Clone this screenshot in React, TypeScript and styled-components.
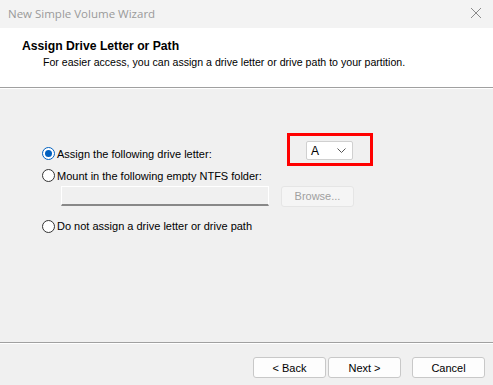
import React from "react";
import styled, { createGlobalStyle } from "styled-components";

const Global = createGlobalStyle`
  html, body { margin: 0; padding: 0; background: #f0f0f0; }
  *, *::before, *::after { box-sizing: border-box; }
`;

const Window = styled.div`
  width: 493px;
  height: 385px;
  display: flex;
  flex-direction: column;
  background: #f0f0f0;
  font-family: "Liberation Sans", Arial, sans-serif;
  font-size: 11px;
  color: #000;
  overflow: hidden;
`;

const TitleBar = styled.div`
  height: 28px;
  flex: none;
  display: flex;
  align-items: center;
  justify-content: space-between;
  padding: 0 8px 2px 8px;
  background: #f3f3f3;
  color: #9a9a9a;
  font-family: "Open Sans", "Noto Sans", sans-serif;
  font-size: 11.5px;
`;

const CloseBtn = styled.div`
  width: 12px;
  height: 12px;
  display: flex;
  margin-right: 3px;
`;

const Header = styled.div`
  height: 59px;
  flex: none;
  background: #ffffff;
  padding: 11px 0 0 22px;
  display: flex;
  flex-direction: column;
  gap: 2px;
`;

const HeaderTitle = styled.div`
  font-weight: bold;
  font-size: 12.2px;
  line-height: 15px;
`;

const HeaderSub = styled.div`
  padding-left: 21px;
  font-size: 10.6px;
`;

const Separator = styled.div`
  flex: none;
  height: 2px;
  border-top: 1px solid #a0a0a0;
  border-bottom: 1px solid #ffffff;
`;

const Body = styled.div`
  flex: 1;
  padding: 53px 0 0 42px;
  display: flex;
  flex-direction: column;
`;

const OptionRow = styled.div<{ $h: number }>`
  height: ${(p) => p.$h}px;
  display: grid;
  grid-template-columns: 264px auto;
  align-items: center;
`;

const RadioLabel = styled.label`
  display: flex;
  align-items: center;
  gap: 2px;
  white-space: nowrap;
`;

const RadioCircle = styled.span<{ $checked?: boolean }>`
  width: 13px;
  height: 13px;
  border-radius: 50%;
  border: 1px solid ${(p) => (p.$checked ? "#0060c0" : "#333")};
  background: #fff;
  display: flex;
  align-items: center;
  justify-content: center;
  &::after {
    content: "";
    display: ${(p) => (p.$checked ? "block" : "none")};
    width: 7px;
    height: 7px;
    border-radius: 50%;
    background: #0060c0;
  }
`;

const Highlight = styled.div`
  position: relative;
  align-self: start;
  margin-top: -1px;
  width: 47px;
  height: 19px;
  &::before {
    content: "";
    position: absolute;
    left: -19px;
    top: -8px;
    width: 86px;
    height: 33px;
    border: 3px solid #ff0000;
  }
`;

const Select = styled.div`
  width: 47px;
  height: 19px;
  background: #fff;
  border: 1px solid #d0d0d0;
  border-radius: 2px;
  display: flex;
  align-items: center;
  justify-content: space-between;
  padding: 0 6px 0 4px;
  font-size: 12px;
`;

const FolderRow = styled.div`
  display: flex;
  align-items: center;
  gap: 12px;
  padding-left: 19px;
  height: 20px;
  margin-bottom: 9px;
`;

const TextBox = styled.div`
  width: 208px;
  height: 20px;
  background: #f0f0f0;
  border-top: 1px solid #ffffff;
  border-left: 1px solid #ffffff;
  border-right: 1px solid #ffffff;
  border-bottom: 2px solid #888888;
`;

const Button = styled.button<{ $disabled?: boolean; $sep?: boolean }>`
  height: 21px;
  width: 73px;
  font-family: inherit;
  font-size: 11px;
  background: ${(p) => (p.$disabled ? "#f5f5f5" : "#fdfdfd")};
  color: ${(p) => (p.$disabled ? "#a0a0a0" : "#000")};
  border: 1px solid ${(p) => (p.$disabled ? "#e5e5e5" : "#c8c8c8")};
  border-radius: 3px;
  padding: 0;
  margin-left: ${(p) => (p.$sep ? "9px" : "0")};
`;

const Footer = styled.div`
  height: 41px;
  flex: none;
  display: flex;
  justify-content: flex-end;
  align-items: flex-start;
  padding: 13px 8px 0 0;
  gap: 2px;
`;

export default function App() {
  return (
    <Window>
      <Global />
      <TitleBar>
        <span>New Simple Volume Wizard</span>
        <CloseBtn>
          <svg width="12" height="12" viewBox="0 0 12 12">
            <path d="M1 1 L11 11 M11 1 L1 11" stroke="#8a8a8a" strokeWidth="1" />
          </svg>
        </CloseBtn>
      </TitleBar>
      <Header>
        <HeaderTitle>Assign Drive Letter or Path</HeaderTitle>
        <HeaderSub>For easier access, you can assign a drive letter or drive path to your partition.</HeaderSub>
      </Header>
      <Separator />
      <Body>
        <OptionRow $h={23}>
          <RadioLabel>
            <RadioCircle $checked />
            Assign the following drive letter:
          </RadioLabel>
          <Highlight>
            <Select>
              <span>A</span>
              <svg width="9" height="5" viewBox="0 0 9 5">
                <path d="M0.5 0.5 L4.5 4.5 L8.5 0.5" stroke="#555" fill="none" />
              </svg>
            </Select>
          </Highlight>
        </OptionRow>
        <OptionRow $h={21}>
          <RadioLabel>
            <RadioCircle />
            Mount in the following empty NTFS folder:
          </RadioLabel>
        </OptionRow>
        <FolderRow>
          <TextBox />
          <Button $disabled>Browse...</Button>
        </FolderRow>
        <OptionRow $h={22}>
          <RadioLabel>
            <RadioCircle />
            Do not assign a drive letter or drive path
          </RadioLabel>
        </OptionRow>
      </Body>
      <Separator />
      <Footer>
        <Button>&lt; Back</Button>
        <Button>Next &gt;</Button>
        <Button $sep>Cancel</Button>
      </Footer>
    </Window>
  );
}
